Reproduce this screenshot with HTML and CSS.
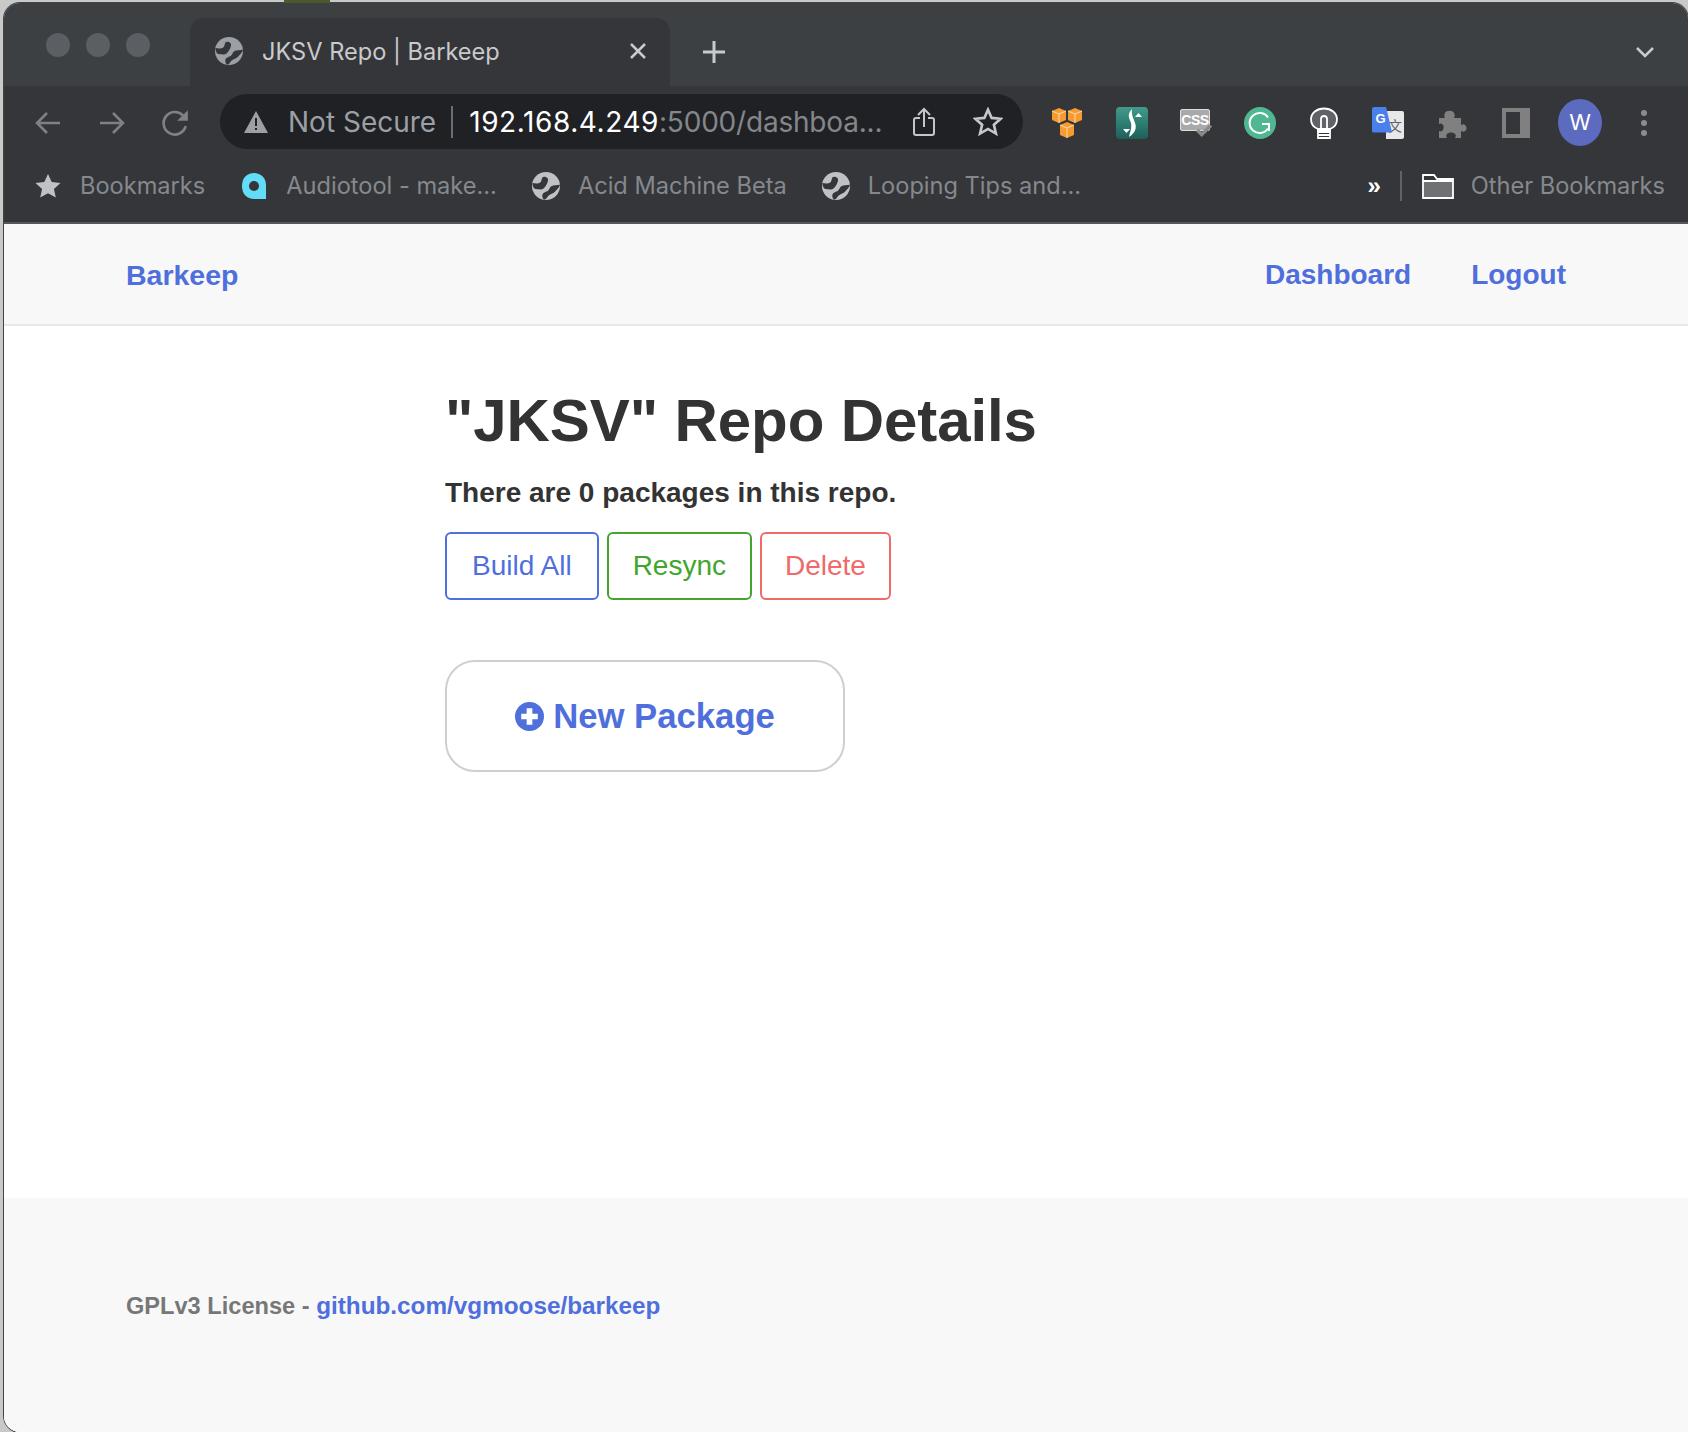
FILE: index.html
```html
<!DOCTYPE html>
<html lang="en">
<head>
    <meta charset="UTF-8">
    <meta name="viewport" content="width=device-width, initial-scale=1.0">
    <title>JKSV Repo | Barkeep</title>
    <link rel="stylesheet" href="styles.css">
</head>
<body>

<svg class="icon-defs" width="0" height="0">
    <symbol id="globe" viewBox="0 0 24 24">
        <circle cx="12" cy="12" r="12" fill="currentColor"/>
        <path d="M.3 9.500c2.500.5 5 .8 6.700-.5 1.500-1 1-3 2-4.500.8-.8 3.500-.5 4.500 1 .8 1.500-.5 4.500-1.500 6-1 2-3 3.500-4.500 3.500S4.500 14.500 3 14.500c-1.500 0-2.500-2-2.700-5z" fill="#35363a"/>
        <path d="M24 11c-2.500.5-5.500 0-7.500 1.200-1.500 1-1.500 3-3 4-1.500.8-3.500 1-4.500 2.800-.5 1.500 0 3 1 4.500 1 .2 1.500 0 2.500-1 1-1.500 2-3 3.500-3.500 2-.5 3.500-1.500 5-3.500 1.500-1.500 2.500-2.500 3-4.500z" fill="#35363a"/>
    </symbol>
</svg>

<div class="desktop-peek"></div>

<div class="window">
    <!-- tab strip -->
    <div class="tab-strip">
        <div class="traffic-lights"><i></i><i></i><i></i></div>
        <div class="tab">
            <svg class="tab-globe"><use href="#globe"/></svg>
            <span class="tab-title">JKSV Repo | Barkeep</span>
            <svg class="tab-close" viewBox="0 0 16 16"><path d="M1 1l14 14M15 1L1 15"/></svg>
        </div>
        <svg class="new-tab" viewBox="0 0 24 24"><path d="M12 1v22M1 12h22"/></svg>
        <svg class="tab-menu" viewBox="0 0 18 12"><path d="M1 2l8 8 8-8"/></svg>
    </div>

    <!-- toolbar -->
    <div class="toolbar">
        <svg class="nav-btn" viewBox="0 0 28 24"><path d="M26 12H3M13 2L3 12l10 10"/></svg>
        <svg class="nav-btn nav-forward" viewBox="0 0 28 24"><path d="M2 12h23M15 2l10 10-10 10"/></svg>
        <svg class="nav-btn nav-reload" viewBox="0 0 28 28"><path d="M24 17a10.500 10.500 0 1 1-2.500-10"/><path class="solid" d="M26 2v10h-10z"/></svg>

        <div class="omnibox">
            <svg class="warn" viewBox="0 0 24 22"><path d="M12 0l12 22H0z" fill="#9aa0a6"/><path d="M11 7h2v8h-2zM11 17h2v2h-2z" fill="#202124"/></svg>
            <span class="not-secure">Not Secure</span>
            <span class="omni-sep"></span>
            <span class="url"><b>192.168.4.249</b>:5000/dashboa...</span>
            <svg class="share" viewBox="0 0 22 30"><path d="M7 11H3a2 2 0 0 0-2 2v13a2 2 0 0 0 2 2h16a2 2 0 0 0 2-2V13a2 2 0 0 0-2-2h-4M11 20V2M5 8l6-6 6 6"/></svg>
            <svg class="star" viewBox="0 0 28 28"><path d="M14 2.500l3.400 7.700 8.400.8-6.300 5.600 1.900 8.200L14 20.500l-7.400 4.300 1.900-8.200L2.200 11l8.400-.8z"/></svg>
        </div>

        <div class="extensions">
            <svg class="ext ext-aws" viewBox="0 0 32 32">
                <path d="M1 4l7-3 7 3v9l-7 3-7-3z" fill="#f59b32"/>
                <path d="M17 4l7-3 7 3v9l-7 3-7-3z" fill="#f59b32"/>
                <path d="M9 18l7-3 7 3v10l-7 3-7-3z" fill="#f59b32"/>
                <path d="M1 4l7 3 7-3M8 7v9M17 4l7 3 7-3M24 7v9M9 18l7 3 7-3M16 21v10" stroke="#ffd9a8" fill="none"/>
            </svg>
            <svg class="ext" viewBox="0 0 32 32">
                <defs><linearGradient id="stylus" x1="0" y1="0" x2="0" y2="1"><stop offset="0" stop-color="#3f9c8c"/><stop offset="1" stop-color="#1f5f59"/></linearGradient></defs>
                <rect width="32" height="32" rx="4" fill="url(#stylus)"/>
                <path d="M16 2c-6 6-2 10-1 14 1 5-1 9-2 14 6-4 8-9 6-14-1-4-4-8-3-14z" fill="#fff"/>
                <path d="M19 10l3.500-4 3.500 4zM7 22l3.500 4 3.500-4z" fill="#fff"/>
            </svg>
            <div class="ext ext-css">
                <span>CSS</span>
                <svg viewBox="0 0 14 12"><path d="M1 6l4 4 8-8"/></svg>
            </div>
            <svg class="ext" viewBox="0 0 32 32">
                <circle cx="16" cy="16" r="16" fill="#4fb893"/>
                <path d="M24 10.500a10 10 0 1 0 0 11" fill="none" stroke="#fff" stroke-width="2"/>
                <path d="M18 17h7v7" fill="none" stroke="#fff" stroke-width="2"/>
            </svg>
            <svg class="ext" viewBox="0 0 32 32">
                <path d="M10 24v-2C5 20 3 16 3 12.500 3 6 9 1.500 16 1.500S29 6 29 12.500c0 3.500-2 7.500-7 9.500v2z" fill="#5f6368" stroke="#fff" stroke-width="1.800"/>
                <path d="M13 22V12a3 3 0 0 1 6 0v10M10 22h12v9H10zM10 25h12M10 28h12" fill="none" stroke="#fff" stroke-width="1.800"/>
            </svg>
            <div class="ext ext-translate">
                <span class="tr-back">文</span>
                <span class="tr-front">G</span>
            </div>
            <svg class="ext" viewBox="0 0 32 32"><path d="M3 11h6c-1-2-1-3 0-5 1-3 8-3 9 0 1 2 1 3 0 5h7v7c2-1 3-1 4 0 2 2 2 5 0 6-1 1-2 1-4 0v7h-6c1-2 1-3 0-4-2-2-6-2-8 0-1 1-1 2 0 4H3v-7c2 1 3 0 4-1 1-2 1-5-1-6-1-1-2 0-3 0z" fill="#808080"/></svg>
            <div class="ext ext-sidebar"></div>
            <div class="avatar">W</div>
            <div class="kebab"><i></i><i></i><i></i></div>
        </div>
    </div>

    <!-- bookmarks -->
    <div class="bookmarks">
        <svg class="bm-star" viewBox="0 0 28 28"><path d="M14 1l4 8.800 9.500 1-7.100 6.400 2 9.300L14 21.700l-8.400 4.800 2-9.300L.5 10.800l9.500-1z"/></svg>
        <span class="bm bm-first">Bookmarks</span>
        <svg class="bm-audio" viewBox="0 0 24 26"><path d="M12 0C5 0 0 5 0 13c0 8 5 13 12 13h12V12C24 5 19 0 12 0z" fill="#62dcf7"/><circle cx="12" cy="13" r="5" fill="#35363a"/></svg>
        <span class="bm bm-audio-text">Audiotool - make...</span>
        <svg class="bm-globe"><use href="#globe"/></svg>
        <span class="bm bm-acid">Acid Machine Beta</span>
        <svg class="bm-globe"><use href="#globe"/></svg>
        <span class="bm bm-loop">Looping Tips and...</span>
        <span class="bm-more">»</span>
        <span class="bm-sep"></span>
        <svg class="bm-folder" viewBox="0 0 32 26"><path d="M1 25V2h11l3 4h16v19z" fill="#35363a"/><path d="M1 8h30v17H1z" fill="#707174"/><path d="M1 25V2h11l3 4h16v19zM1 8h30" fill="none" stroke="#fff" stroke-width="1.800"/></svg>
        <span class="bm">Other Bookmarks</span>
    </div>

    <!-- page -->
    <div class="page">
        <header class="site-nav">
            <a class="brand" href="#">Barkeep</a>
            <nav class="site-links">
                <a href="#">Dashboard</a>
                <a href="#">Logout</a>
            </nav>
        </header>

        <main class="content">
            <h1>"JKSV" Repo Details</h1>
            <p class="summary">There are 0 packages in this repo.</p>
            <div class="actions">
                <button class="btn btn-blue">Build All</button>
                <button class="btn btn-green">Resync</button>
                <button class="btn btn-red">Delete</button>
            </div>
            <a class="new-package" href="#">
                <svg viewBox="0 0 28 28"><circle cx="14" cy="14" r="14" fill="#4f6fdd"/><path d="M14 6v16M6 14h16" stroke="#fff" stroke-width="5.500"/></svg>
                New Package
            </a>
        </main>

        <footer class="site-footer">
            GPLv3 License - <a href="#">github.com/vgmoose/barkeep</a>
        </footer>
    </div>
</div>

</body>
</html>
```

FILE: styles.css
```css
:root {
    --strip: #3c4043;
    --toolbar: #35363a;
    --omni: #202124;
    --grey-text: #9aa0a6;
    --blue: #4f6fdd;
}

html, body {
    height: 100%;
}

body {
    margin: 0;
    background: #c9c9c9;
    font-family: "Liberation Sans", Arial, sans-serif;
    overflow: hidden;
}

.icon-defs {
    position: absolute;
}

/* bit of the desktop wallpaper showing above the window */
.desktop-peek {
    position: absolute;
    left: 284px;
    top: 0;
    width: 46px;
    height: 3px;
    background: #4a5a2c;
}

.window {
    margin: 3px 0 0 4px;
    height: 1429px;
    display: flex;
    flex-direction: column;
    border-radius: 16px 16px 0 16px;
    overflow: hidden;
    box-shadow: 0 0 0 1px #444;
}

/* --- tab strip --- */
.tab-strip {
    height: 83px;
    flex-shrink: 0;
    display: flex;
    align-items: flex-end;
    background: var(--strip);
    color: #c4c7c9;
}

.traffic-lights {
    width: 186px;
    align-self: flex-start;
    display: flex;
    gap: 16px;
    padding: 30px 0 0 42px;
    box-sizing: border-box;
}
.traffic-lights i {
    width: 24px;
    height: 24px;
    border-radius: 50%;
    background: #5b5f63;
}

.tab {
    width: 480px;
    height: 68px;
    display: flex;
    align-items: center;
    background: var(--toolbar);
    border-radius: 14px 14px 0 0;
    box-sizing: border-box;
    padding: 0 24px 2px 25px;
}
.tab-globe {
    width: 28px;
    height: 30px;
    color: #9aa0a6;
}
.tab-title {
    flex: 1;
    margin-left: 19px;
    font: 23.6px Inter, "Liberation Sans", sans-serif;
    color: #c8cacc;
}
.tab-close {
    width: 16px;
    height: 16px;
    fill: none;
    stroke: #c8cacc;
    stroke-width: 2.500;
}
.new-tab {
    width: 24px;
    height: 24px;
    margin: 0 0 22px 32px;
    fill: none;
    stroke: #c8cacc;
    stroke-width: 3;
}
.tab-menu {
    width: 18px;
    height: 12px;
    margin: 0 34px 28px auto;
    fill: none;
    stroke: #c8cacc;
    stroke-width: 2.500;
}

/* --- toolbar --- */
.toolbar {
    height: 73px;
    flex-shrink: 0;
    display: flex;
    align-items: center;
    background: var(--toolbar);
    padding-left: 30px;
}
.nav-btn {
    width: 28px;
    height: 26px;
    margin-right: 36px;
    fill: none;
    stroke: #7e8286;
    stroke-width: 2.500;
}
.nav-btn .solid {
    fill: #7e8286;
    stroke: none;
}
.nav-forward {
    margin-right: 34px;
}
.nav-reload {
    width: 30px;
    height: 30px;
    margin-right: 30px;
}

.omnibox {
    width: 803px;
    height: 55px;
    margin-bottom: 2px;
    display: flex;
    align-items: center;
    box-sizing: border-box;
    padding-left: 24px;
    background: var(--omni);
    border-radius: 28px;
    font: 28px Inter, "Liberation Sans", sans-serif;
    color: #83878b;
}
.warn {
    width: 24px;
    height: 22px;
}
.not-secure {
    margin-left: 20px;
    color: var(--grey-text);
    white-space: nowrap;
}
.omni-sep {
    width: 2px;
    height: 32px;
    margin: 0 16px 0 15px;
    background: #6b6e72;
}
.url {
    width: 444px;
    white-space: nowrap;
    overflow: hidden;
    letter-spacing: -0.2px;
}
.url b {
    font-weight: 400;
    color: #fff;
    letter-spacing: 0.58px;
}
.share {
    width: 22px;
    height: 30px;
    fill: none;
    stroke: #c4c7c9;
    stroke-width: 2;
}
.star {
    width: 30px;
    height: 30px;
    margin-left: 38px;
    fill: none;
    stroke: #c4c7c9;
    stroke-width: 2.500;
}

.extensions {
    display: flex;
    align-items: center;
    margin-left: 28px;
}
.ext {
    width: 32px;
    height: 32px;
    margin-right: 32px;
    flex-shrink: 0;
}
.ext-aws {
    margin-right: 33px;
}
.ext-css {
    position: relative;
}
.ext-css span {
    display: block;
    width: 30px;
    height: 22px;
    margin-top: 2px;
    background: #a9a9a9;
    border: 1px solid #ddd;
    border-radius: 2px;
    box-sizing: border-box;
    font: bold 14px/20px "Liberation Sans", sans-serif;
    letter-spacing: -0.5px;
    color: #fff;
    text-align: center;
}
.ext-css svg {
    position: absolute;
    right: 0;
    bottom: 2px;
    width: 16px;
    height: 14px;
    fill: none;
    stroke: #8a8a8a;
    stroke-width: 3;
}
.ext-translate {
    position: relative;
}
.tr-back {
    position: absolute;
    right: 0;
    bottom: 0;
    width: 18px;
    height: 28px;
    background: #e8e8e8;
    border-radius: 0 2px 2px 0;
    font: 14px/28px "Noto Sans CJK SC", sans-serif;
    color: #5f6368;
    text-align: center;
}
.tr-front {
    position: absolute;
    left: 0;
    top: 0;
    width: 20px;
    height: 26px;
    padding-right: 3px;
    box-sizing: border-box;
    background: #4a80ec;
    clip-path: polygon(0 0, 70% 0, 100% 100%, 0 100%);
    border-radius: 2px 0 0 2px;
    font: bold 13px/24px "Liberation Sans", sans-serif;
    color: #fff;
    text-align: center;
}
.ext-sidebar {
    width: 28px;
    height: 30px;
    margin: 0 32px 0 2px;
    box-sizing: border-box;
    border: 4px solid #808080;
    border-right-width: 10px;
    background: #35363a;
}
.avatar {
    width: 44px;
    height: 47px;
    margin: 0 0 0 -4px;
    border-radius: 50%;
    background: #5c6bc0;
    color: #fff;
    font: 22px/47px Inter, "Liberation Sans", sans-serif;
    text-align: center;
}
.kebab {
    display: flex;
    flex-direction: column;
    gap: 4px;
    margin-left: 39px;
}
.kebab i {
    width: 6px;
    height: 6px;
    border-radius: 50%;
    background: #8a8d90;
}

/* --- bookmarks --- */
.bookmarks {
    height: 53px;
    padding: 0 0 10px 31px;
    flex-shrink: 0;
    display: flex;
    align-items: center;
    background: var(--toolbar);
    border-bottom: 2px solid #55575a;
}
.bm {
    font: 23.6px Inter, "Liberation Sans", sans-serif;
    color: #85898d;
    white-space: nowrap;
}
.bm-star {
    width: 26px;
    height: 26px;
    fill: #bfc2c5;
}
.bm-first {
    margin-left: 19px;
}
.bm-audio {
    width: 24px;
    height: 26px;
    margin-left: 37px;
}
.bm-audio-text {
    margin-left: 20px;
}
.bm-globe {
    width: 28px;
    height: 30px;
    margin-left: 35px;
    color: #bfc2c5;
}
.bm-acid,
.bm-loop {
    margin-left: 18px;
}
.bm-more {
    margin-left: auto;
    font: bold 24px "Liberation Sans", sans-serif;
    color: #fff;
}
.bm-sep {
    width: 2px;
    height: 30px;
    margin: 0 20px 0 19px;
    background: #5f6266;
}
.bm-folder {
    width: 32px;
    height: 26px;
    margin-right: 17px;
}
.bm:last-child {
    margin-right: 23px;
}

/* --- page --- */
.page {
    flex: 1;
    display: flex;
    flex-direction: column;
    background: #fff;
    color: #333;
}

.site-nav {
    height: 98px;
    flex-shrink: 0;
    display: flex;
    align-items: center;
    justify-content: space-between;
    padding: 2px 122px 0;
    background: #f8f8f8;
    border-bottom: 2px solid #e8e8e8;
}
.site-nav a,
.site-footer a {
    color: var(--blue);
    text-decoration: none;
}
.site-links a {
    font-size: 28px;
    font-weight: 700;
}
.site-nav .brand {
    font-size: 28.500px;
    font-weight: 700;
}
.site-links {
    display: flex;
    gap: 60px;
}

.content {
    flex: 1;
    padding: 60px 0 0 441px;
}
.content h1 {
    margin: 0;
    font-size: 60px;
    line-height: 70px;
    font-weight: 700;
    letter-spacing: -0.1px;
}
.summary {
    margin: 19px 0 0;
    font-size: 28px;
    line-height: 36px;
    font-weight: 700;
}
.actions {
    display: flex;
    gap: 8px;
    margin-top: 21px;
}
.btn {
    height: 68px;
    padding: 0 24px;
    background: #fff;
    border: 2px solid;
    border-radius: 6px;
    font-family: inherit;
    font-size: 28px;
}
.btn-blue {
    padding: 0 25px;
    color: var(--blue);
    border-color: var(--blue);
}
.btn-green {
    color: #41a62a;
    border-color: #41a62a;
}
.btn-red {
    padding: 0 23px;
    color: #f06a6a;
    border-color: #f06a6a;
}

.new-package {
    width: 400px;
    height: 112px;
    margin-top: 60px;
    display: flex;
    align-items: center;
    justify-content: center;
    gap: 9px;
    box-sizing: border-box;
    border: 2px solid #cfcfcf;
    border-radius: 30px;
    color: var(--blue);
    font-size: 34.700px;
    font-weight: 700;
    text-decoration: none;
}
.new-package svg {
    width: 29px;
    height: 29px;
}

.site-footer {
    height: 234px;
    flex-shrink: 0;
    box-sizing: border-box;
    padding: 92px 0 0 122px;
    background: #f8f8f8;
    color: #777;
    font-size: 23.6px;
    line-height: 32px;
    font-weight: 700;
}
.site-footer a {
    font-size: 24.300px;
}
```
